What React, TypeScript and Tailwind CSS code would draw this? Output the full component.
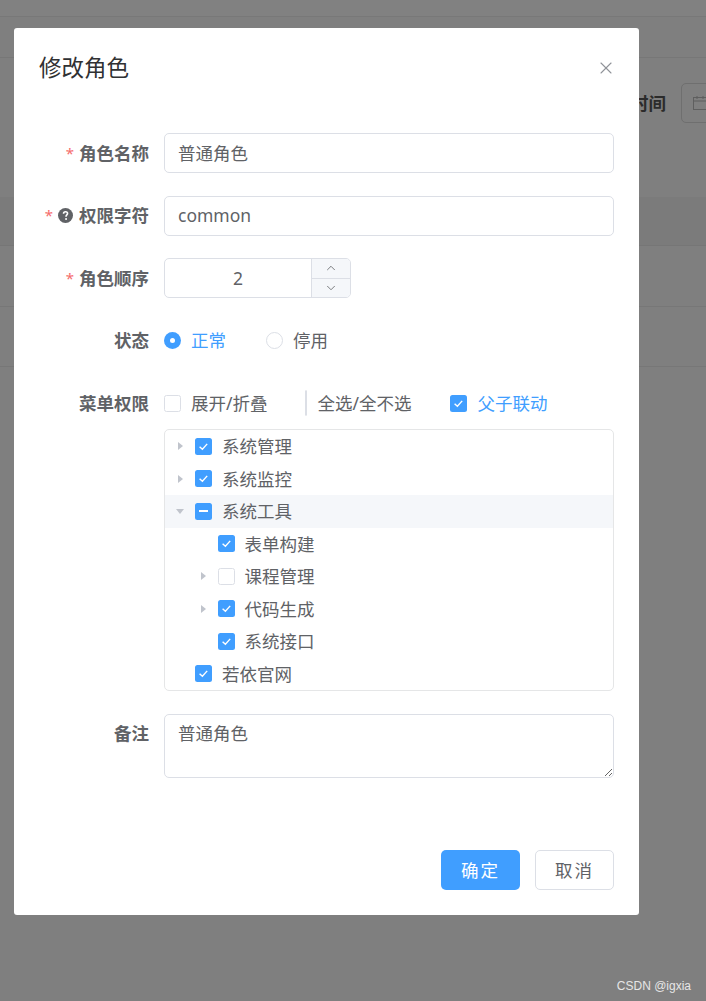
import React from 'react';
import { X, ChevronUp, ChevronDown } from 'lucide-react';

type CheckState = 'on' | 'off' | 'half';

function Checkbox({ state }: { state: CheckState }) {
  if (state === 'off') {
    return <span className="w-[17px] h-[17px] shrink-0 rounded-[2.5px] border border-[#dcdfe6] bg-white" />;
  }
  return (
    <span className="w-[17px] h-[17px] shrink-0 rounded-[2.5px] bg-[#409eff] flex items-center justify-center">
      {state === 'on' ? (
        <svg width="17" height="17" viewBox="0 0 17 17">
          <path d="M4.6 8.7 L7.4 11.3 L12.2 5.9" stroke="#fff" strokeWidth="1.4" fill="none" />
        </svg>
      ) : (
        <span className="w-[9px] h-[2px] bg-white" />
      )}
    </span>
  );
}

function Caret({ dir }: { dir: 'right' | 'down' }) {
  return (
    <svg width="10" height="10" viewBox="0 0 10 10">
      {dir === 'right' ? (
        <polygon points="3,1 8,5 3,9" fill="#c0c4cc" />
      ) : (
        <polygon points="1,3 9,3 5,8" fill="#c0c4cc" />
      )}
    </svg>
  );
}

type TreeRow = {
  text: string;
  level: number;
  arrow?: 'right' | 'down';
  state: CheckState;
  active?: boolean;
};

const treeRows: TreeRow[] = [
  { text: '系统管理', level: 0, arrow: 'right', state: 'on' },
  { text: '系统监控', level: 0, arrow: 'right', state: 'on' },
  { text: '系统工具', level: 0, arrow: 'down', state: 'half', active: true },
  { text: '表单构建', level: 1, state: 'on' },
  { text: '课程管理', level: 1, arrow: 'right', state: 'off' },
  { text: '代码生成', level: 1, arrow: 'right', state: 'on' },
  { text: '系统接口', level: 1, state: 'on' },
  { text: '若依官网', level: 0, state: 'on' },
];

function FormItem({
  label,
  required,
  help,
  children,
}: {
  label: string;
  required?: boolean;
  help?: boolean;
  children: React.ReactNode;
}) {
  return (
    <div className="flex mb-[22.5px]">
      <div className="w-[125px] shrink-0 pr-[15px] h-[40px] flex items-center justify-end text-[17.5px] font-bold text-[#606266]">
        {required && <span className="text-[#f56c6c] font-normal text-[15px] mr-[5px]">*</span>}
        {help && (
          <svg width="15" height="15" viewBox="0 0 16 16" className="mr-[6px]">
            <circle cx="8" cy="8" r="8" fill="#606266" />
            <path
              d="M5.9 6.1 C5.9 4.8 6.9 4 8.1 4 C9.3 4 10.2 4.8 10.2 5.9 C10.2 7.3 8.6 7.4 8.6 8.8 V9.4"
              stroke="#fff"
              strokeWidth="1.7"
              fill="none"
            />
            <circle cx="8.6" cy="11.8" r="1.05" fill="#fff" />
          </svg>
        )}
        <span>{label}</span>
      </div>
      <div className="flex-1 min-w-0">{children}</div>
    </div>
  );
}

function Input({ value }: { value: string }) {
  return (
    <div className="h-[40px] border border-[#dcdfe6] rounded-[5px] px-[13px] flex items-center text-[17.5px] text-[#606266] bg-white">
      {value}
    </div>
  );
}

export default function App() {
  return (
    <div className="relative h-[1001px] w-full overflow-hidden bg-[#7f7f7f] font-['Noto_Sans','Noto_Sans_CJK_SC',sans-serif]">
      {/* page behind the mask */}
      <div className="h-[17px] bg-[#818181] border-b border-[#787878]" />
      <div className="h-[41px] border-b border-[#777777]" />
      <div className="h-[139px] pl-[631px] pt-[25px] flex items-start whitespace-nowrap">
        <span className="h-[40px] flex items-center text-[17.5px] font-bold text-[#2b2b2b]">时间</span>
        <div className="ml-[15px] w-[120px] h-[40px] shrink-0 border border-[#6f6f6f] rounded-[5px] flex items-center pl-[10px]">
          <svg width="16" height="16" viewBox="0 0 16 16">
            <rect x="1.5" y="2.5" width="13" height="12" fill="none" stroke="#5f5f5f" strokeWidth="1" />
            <line x1="1.5" y1="6" x2="14.5" y2="6" stroke="#5f5f5f" />
            <line x1="5" y1="1" x2="5" y2="4" stroke="#5f5f5f" />
            <line x1="11" y1="1" x2="11" y2="4" stroke="#5f5f5f" />
          </svg>
        </div>
      </div>
      <div className="h-[49px] bg-[#7b7b7b] border-b border-[#767676]" />
      <div className="h-[61px] border-b border-[#777777]" />
      <div className="h-[60px] border-b border-[#777777]" />

      {/* dialog */}
      <div className="absolute left-[14px] top-[28px] w-[625px] h-[887px] bg-white rounded-[3px] flex flex-col">
        <div className="pt-[25px] px-[25px] pb-[12.5px] flex items-center justify-between">
          <span className="text-[22.5px] leading-[30px] text-[#303133]">修改角色</span>
          <X size={20} strokeWidth={1.3} color="#909399" className="mr-[-2px]" />
        </div>

        <div className="px-[25px] pt-[37.5px] pb-[37.5px]">
          <FormItem label="角色名称" required>
            <Input value="普通角色" />
          </FormItem>
          <FormItem label="权限字符" required help>
            <Input value="common" />
          </FormItem>
          <FormItem label="角色顺序" required>
            <div className="w-[187px] h-[40px] border border-[#dcdfe6] rounded-[5px] flex overflow-hidden">
              <div className="flex-1 flex items-center justify-center text-[17.5px] text-[#606266]">2</div>
              <div className="w-[39px] border-l border-[#dcdfe6] bg-[#f5f7fa] flex flex-col">
                <div className="flex-1 flex items-center justify-center border-b border-[#dcdfe6]">
                  <ChevronUp size={14} strokeWidth={1.4} color="#606266" />
                </div>
                <div className="flex-1 flex items-center justify-center">
                  <ChevronDown size={14} strokeWidth={1.4} color="#606266" />
                </div>
              </div>
            </div>
          </FormItem>
          <FormItem label="状态">
            <div className="h-[40px] flex items-center text-[17.5px]">
              <span className="w-[17px] h-[17px] rounded-full bg-[#409eff] flex items-center justify-center">
                <span className="w-[5px] h-[5px] rounded-full bg-white" />
              </span>
              <span className="ml-[10px] text-[#409eff]">正常</span>
              <span className="ml-[40px] w-[17px] h-[17px] rounded-full border border-[#dcdfe6] bg-white" />
              <span className="ml-[10px] text-[#606266]">停用</span>
            </div>
          </FormItem>
          <FormItem label="菜单权限">
            <div className="h-[40px] flex items-center text-[17.5px] text-[#606266]">
              <Checkbox state="off" />
              <span className="ml-[10px]">展开/折叠</span>
              <span className="ml-[37px]">
                <Checkbox state="off" />
              </span>
              <span className="ml-[11px]">全选/全不选</span>
              <span className="ml-[38px]">
                <Checkbox state="on" />
              </span>
              <span className="ml-[11px] text-[#409eff]">父子联动</span>
            </div>
            <div className="mt-[6px] border border-[#e5e6e7] rounded-[5px] overflow-hidden bg-white">
              {treeRows.map((r) => (
                <div
                  key={r.text}
                  className={`h-[32.5px] flex items-center text-[17.5px] text-[#606266] ${r.active ? 'bg-[#f5f7fa]' : ''}`}
                  style={{ paddingLeft: r.level * 22.5 }}
                >
                  <span className="w-[30px] flex items-center justify-center">
                    {r.arrow && <Caret dir={r.arrow} />}
                  </span>
                  <Checkbox state={r.state} />
                  <span className="ml-[10px]">{r.text}</span>
                </div>
              ))}
            </div>
          </FormItem>
          <div className="flex">
            <div className="w-[125px] shrink-0 pr-[15px] h-[40px] flex items-center justify-end text-[17.5px] font-bold text-[#606266]">
              备注
            </div>
            <textarea
              readOnly
              defaultValue="普通角色"
              className="flex-1 h-[64px] border border-[#dcdfe6] rounded-[5px] px-[13px] py-[5px] text-[17.5px] leading-[1.5] text-[#606266] outline-none resize-y"
            />
          </div>
        </div>

        <div className="mt-auto pt-[12.5px] pb-[25px] px-[25px] flex justify-end gap-[15px]">
          <button className="w-[79px] h-[40px] rounded-[5px] bg-[#409eff] text-white text-[17.5px] tracking-[2px]">
            确定
          </button>
          <button className="w-[79px] h-[40px] rounded-[5px] border border-[#dcdfe6] bg-white text-[#606266] text-[17.5px] tracking-[2px]">
            取消
          </button>
        </div>
      </div>

      <span className="absolute right-[15px] bottom-[6px] text-[12px] text-[#e6e6e6] font-['Liberation_Sans',sans-serif]">
        CSDN @igxia
      </span>
    </div>
  );
}
